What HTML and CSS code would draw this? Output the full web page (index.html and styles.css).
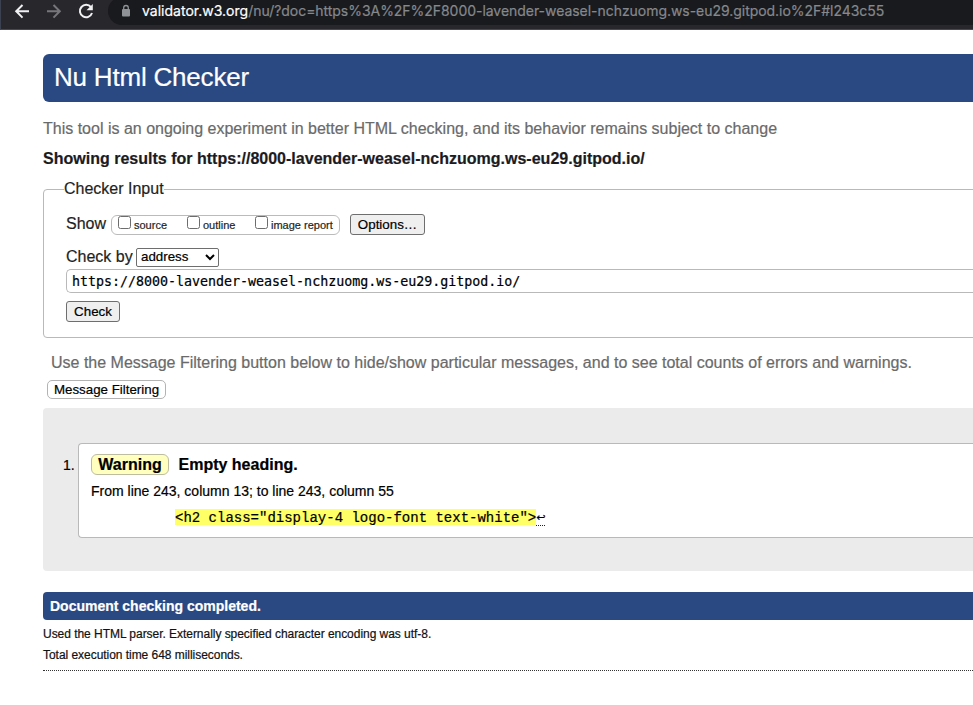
FILE: index.html
```html
<!DOCTYPE html>
<html lang="en">
<head>
<meta charset="utf-8">
<title>Nu Html Checker</title>
<link rel="stylesheet" href="styles.css">
</head>
<body>
<header class="toolbar">
  <svg class="nav" width="108" height="29" viewBox="0 0 108 29" fill="none" stroke-width="2">
    <path d="M29 11.3H16.5M22.5 5l-6.3 6.3 6.3 6.3" stroke="#f1f1f3"/>
    <path d="M47 11.3h12.5M53.5 5l6.3 6.3-6.3 6.3" stroke="#77777b"/>
    <path d="M91 7.2A6.2 6.2 0 1 0 92 13" stroke="#f1f1f3"/>
    <path d="M92.8 4v6.3h-6.3z" fill="#f1f1f3"/>
  </svg>
  <div class="omnibox">
    <svg class="lock" width="10" height="14" viewBox="0 0 10 14">
      <rect x="1" y="5" width="8" height="7.5" rx="1" fill="#8f9397"/>
      <path d="M2.7 5.5V3.8a2.3 2.3 0 0 1 4.6 0v1.7" fill="none" stroke="#8f9397" stroke-width="1.3"/>
    </svg>
    <span class="url"><span class="host">validator.w3.org</span><span class="path">/nu/?doc=https%3A%2F%2F8000-lavender-weasel-nchzuomg.ws-eu29.gitpod.io%2F#l243c55</span></span>
  </div>
</header>
<main>
  <h1><span>Nu Html Checker</span></h1>
  <p class="intro"><span>This tool is an ongoing experiment in better HTML checking, and its behavior remains subject to change</span></p>
  <h2><span>Showing results for https://8000-lavender-weasel-nchzuomg.ws-eu29.gitpod.io/</span></h2>
  <fieldset>
    <legend>Checker Input</legend>
    <div class="row show">
      <span class="label">Show</span>
      <span class="checks">
        <label class="source"><input type="checkbox"><span>source</span></label>
        <label class="outline"><input type="checkbox"><span>outline</span></label>
        <label><input type="checkbox"><span>image report</span></label>
      </span>
      <button class="options">Options…</button>
    </div>
    <div class="row by">
      <span class="label">Check by</span>
      <div class="select"><span>address</span><svg width="10" height="7" viewBox="0 0 10 7"><path d="M1 1l4 4 4-4" fill="none" stroke="#000" stroke-width="2"/></svg></div>
    </div>
    <div class="address">https://8000-lavender-weasel-nchzuomg.ws-eu29.gitpod.io/</div>
    <button class="check">Check</button>
  </fieldset>
  <p class="hint"><span>Use the Message Filtering button below to hide/show particular messages, and to see total counts of errors and warnings.</span></p>
  <button class="filter">Message Filtering</button>
  <section class="results">
    <span class="num">1.</span>
    <article>
      <div class="message"><strong class="badge">Warning</strong><strong class="empty">Empty heading.</strong></div>
      <p class="location"><span>From line 243, column 13; to line 243, column 55</span></p>
      <div class="extract"><code>&lt;h2 class="display-4 logo-font text-white"&gt;</code><span class="lf">↩</span></div>
    </article>
  </section>
  <div class="done"><span>Document checking completed.</span></div>
  <footer>
    <p><span class="used">Used the HTML parser. Externally specified character encoding was utf-8.</span></p>
    <p><span class="time">Total execution time 648 milliseconds.</span></p>
  </footer>
</main>
</body>
</html>
```
FILE: styles.css
```css
* { box-sizing: border-box; }
body { margin: 0; background: #fff; color: #1f1f23; font: 16px/20px "Liberation Sans", Arial, sans-serif; height: 705px; overflow: hidden; -webkit-text-stroke: 0.2px; }
p, h1, h2 { margin: 0; font-weight: normal; white-space: nowrap; }
.toolbar { display: flex; height: 30px; background: #28272c; border-bottom: 1px solid #49484d; border-left: 1px solid #3b4150; overflow: hidden; }
.nav { flex: none; margin-left: -1px; }
.omnibox { flex: 1; height: 28px; margin-top: -3px; background: #191a1d; border-radius: 14px 0 0 14px; display: flex; align-items: center; padding-left: 13px; }
.lock { flex: none; margin-right: 11px; }
.url { font: 14px/20px Inter, sans-serif; letter-spacing: -0.04px; white-space: nowrap; color: #85888c; }
.host { color: #fff; letter-spacing: 0.01px; }
main { padding: 24px 0 0 43px; }
h1 { height: 48px; padding-left: 11px; border-radius: 6px 0 0 6px; background: #2a4983; color: #fff; font-size: 26px; line-height: 47px; letter-spacing: -0.2px; }
.intro { margin-top: 17px; height: 20px; color: #6a6a6a; }
h2 { margin-top: 10px; height: 20px; font-size: 16px; font-weight: bold; color: #1b1b1f; letter-spacing: 0.01px; }
fieldset { margin: 10px 0 0; width: 960px; height: 159px; padding: 14px 0 0 22px; border: 1px solid #b9b9b9; border-radius: 4px; min-width: 0; }
legend { height: 20px; margin-left: -2px; padding: 0; }
.row { display: flex; align-items: center; white-space: nowrap; }
.show { height: 22px; }
.show .label { width: 45px; }
.checks { display: flex; width: 229px; height: 20px; margin-top: 1px; padding-left: 6px; border: 1px solid #bbb; border-radius: 6px; font-size: 11px; line-height: 19px; }
.checks label { display: flex; }
.source { width: 69px; }
.outline { width: 68px; }
.checks input { appearance: none; flex: none; width: 13px; height: 13px; margin: 0 3px 0 0; border: 1px solid #6d6d6d; border-radius: 2.5px; background: #fff; }
button { display: block; height: 21px; padding: 0; border: 1px solid #6e6e6e; border-radius: 3px; background: #efefef; color: #000; font: 13.333px/19px "Liberation Sans", Arial, sans-serif; text-align: center; white-space: nowrap; }
.options { width: 75px; margin-left: 10px; }
.by { margin-top: 12px; height: 20px; }
.by .label { width: 70px; }
.select { display: flex; align-items: center; justify-content: space-between; width: 83px; height: 19px; padding: 0 3px 0 4px; border: 1px solid #6e6e6e; border-radius: 2px; color: #000; font-size: 13.333px; }
.address { margin-top: 2px; height: 24px; padding: 1px 0 0 5px; border: 1px solid #b9b9b9; border-right: 0; border-radius: 5px 0 0 5px; color: #000; font: 13.333px/22px "DejaVu Sans Mono", monospace; letter-spacing: -0.02px; white-space: nowrap; }
.check { margin-top: 8px; width: 54px; }
.hint { margin: 15px 0 0 8px; height: 20px; color: #6a6a6a; }
.filter { margin: 7px 0 0 4px; width: 119px; height: 19px; line-height: 17px; background: #fff; border-color: #b3b3b3; border-radius: 5px; }
.results { display: flex; margin-top: 9px; height: 163px; padding: 35px 0 0 20px; border-radius: 4px 0 0 4px; background: #ebebeb; color: #000; }
.num { width: 15px; margin-top: 12px; font-size: 14px; }
article { flex: 1; height: 95px; padding: 10px 0 0 12px; background: #fff; border: 1px solid #b9b9b9; border-right: 0; border-radius: 4px 0 0 4px; }
.message { display: flex; height: 21px; }
.badge { width: 78px; height: 21px; border: 1px solid #bdbda0; border-radius: 6px; background: #ffffbf; text-align: center; line-height: 20px; }
.empty { margin-left: 9.5px; line-height: 22px; }
.location { margin-top: 6px; height: 20px; font-size: 14px; }
.extract { display: flex; margin: 8px 0 0 84px; height: 17px; font: 14px/18px "Liberation Mono", monospace; white-space: nowrap; }
.extract code { height: 16px; font: inherit; background: #ffff66; }
.lf { width: 9px; height: 17px; border-bottom: 1px dotted #222; font: 11px/17px "DejaVu Sans", sans-serif; }
.done { margin-top: 21px; height: 28px; padding-left: 7px; border-radius: 4px 0 0 4px; background: #2a4983; color: #fff; font-size: 14px; font-weight: bold; line-height: 28px; }
footer { padding-top: 4px; height: 51px; border-bottom: 1px dotted #333; color: #111; font-size: 12px; letter-spacing: -0.04px; }
footer p { height: 21px; }
```
